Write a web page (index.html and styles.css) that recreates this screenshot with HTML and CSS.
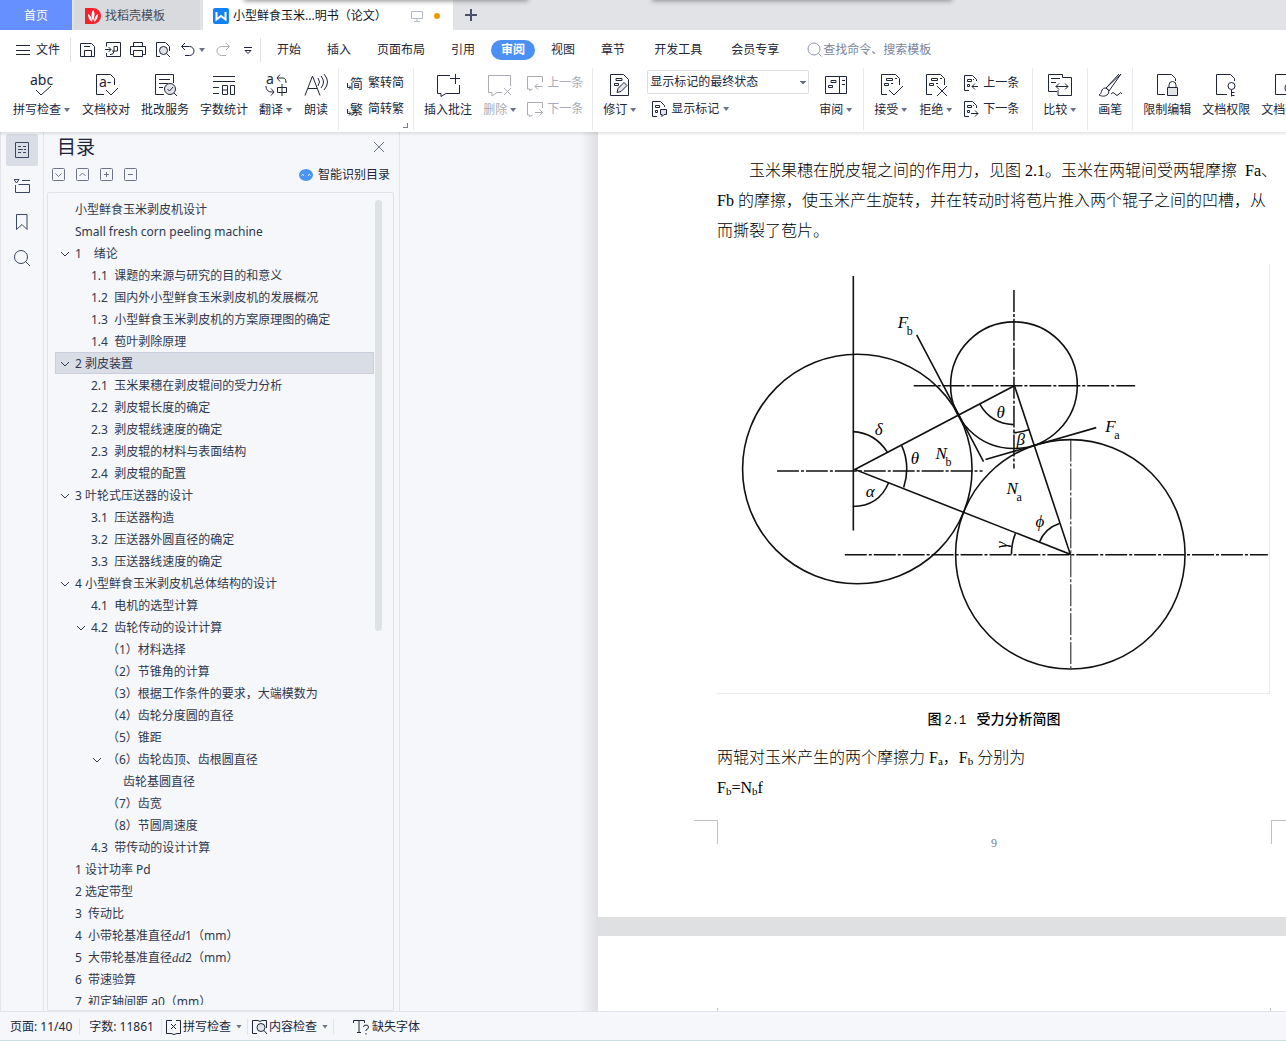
FILE: index.html
```html
<!DOCTYPE html>
<html lang="zh-CN">
<head>
<meta charset="utf-8">
<title>小型鲜食玉米剥皮机说明书（论文）</title>
<link rel="stylesheet" href="styles.css">
</head>
<body>
<svg class="defs" aria-hidden="true">
  <symbol id="page-lines" viewBox="0 0 24 24"><path d="M8 21.500H2.500v-20h14l4 4V12M7.500 5.500h6v2h-6zM16 5.500h2M5.500 10.500h4v2h-4zM12 10.500h2"/></symbol>
  <symbol id="mark-prev" viewBox="0 0 16 16"><path d="M6 15.500H1.500V.500h8l4 4V6M4.500 4.500h4v2h-4zM4.500 9.500h2v2h-2zM10 4.500h1M15 11.500H9M12 8.500l-3 3 3 3"/></symbol>
  <symbol id="mark-next" viewBox="0 0 16 16"><path d="M6 15.500H1.500V.500h8l4 4V7M4.500 4.500h4v2h-4zM4.500 9.500h2v2h-2zM10 4.500h1M8 12.500h7M12 9.500l3 3-3 3"/></symbol>
  <symbol id="note-prev" viewBox="0 0 16 16"><path d="M15.500 7V1.500H.500v12.500h2v1.500l3-1.500M15.500 11.500H8M11 8.500l-3 3 3 3"/></symbol>
  <symbol id="note-next" viewBox="0 0 16 16"><path d="M15.500 7V1.500H.500v12.500h2v1.500l3-1.500M8 11.500h7.500M12.500 8.500l3 3-3 3"/></symbol>
  <symbol id="fold" viewBox="0 0 10 10"><path d="M1 3l4 4 4-4"/></symbol>
</svg>

<header class="tabs">
  <div class="window-shade shade-a"></div>
  <div class="window-shade shade-b"></div>
  <button class="tab tab-home">首页</button>
  <button class="tab tab-docer">
    <svg class="ic16" viewBox="0 0 16 16"><path d="M0 0h8a8 8 0 0 1 0 16H0z" fill="#f5222d" stroke="none"/><path d="M8 2c2 2 2 6 0 11C6 9 6 5 8 2zM3 6c2 1 4 3 4 8C4 12 3 9 3 6zM13 6c0 3-1 6-4 8 0-4 2-7 4-8z" fill="#fff" stroke="none"/></svg>
    找稻壳模板
  </button>
  <button class="tab tab-doc">
    <svg class="ic16" viewBox="0 0 16 16"><rect width="16" height="16" rx="2" fill="#1382f5" stroke="none"/><path d="M3.500 4v7.500L8 8l4.500 3.500V4" stroke="#fff" stroke-width="2"/></svg>
    <span class="tab-name">小型鲜食玉米...明书（论文）</span>
    <svg class="ic12 monitor" viewBox="0 0 12 12"><path d="M.500 1.500h11v7H.500zM6 8.500V11M3 11.500h6"/></svg>
    <i class="unsaved"></i>
  </button>
  <button class="tab-add" aria-label="新建"><svg class="ic12" viewBox="0 0 12 12"><path d="M6 0v12M0 6h12" stroke-width="2"/></svg></button>
</header>

<nav class="menu">
  <button class="file-btn"><svg class="ic14" viewBox="0 0 14 14"><path d="M0 2.500h14M0 7.500h14M0 11.500h14"/></svg>文件</button>
  <div class="quick">
    <button aria-label="保存"><svg class="ic16" viewBox="0 0 16 16"><path d="M.500 14.500v-13h11l3 3v10zM4.500 14V8.500h7V14M4 4.500h6"/></svg></button>
    <button aria-label="输出为PDF"><svg class="ic16" viewBox="0 0 16 16"><path d="M1.500 4.500v-4h14v14h-14V11M0 7.500h6M3.500 5L6 7.500 3.500 10M5 12.500h1q3 0 3-4v-4h3.500v4.500H7"/></svg></button>
    <button aria-label="打印"><svg class="ic16" viewBox="0 0 16 16"><path d="M3.500 4.500v-4h9v4M3 12.500H.500v-8h15v8H13M3.500 8.500h9v6h-9z"/></svg></button>
    <button aria-label="打印预览"><svg class="ic16" viewBox="0 0 16 16"><path d="M5 14.500H1.500V.500h9l4 4V9"/><circle cx="8.500" cy="8.500" r="4" fill="#e2e4e8"/><path d="M11.500 11.500l3.500 3.500"/></svg></button>
    <button class="undo" aria-label="撤销"><svg class="ic16" viewBox="0 0 16 16"><path d="M5 1L1.500 4.500 5 8M2 4.500h7.500a4.500 4.500 0 0 1 0 9H5"/></svg><i class="caret"></i></button>
    <button class="off" aria-label="恢复"><svg class="ic16" viewBox="0 0 16 16"><path d="M11 1l3.500 3.500L11 8M14 4.500H6.500a4.500 4.500 0 0 0 0 9H11"/></svg></button>
    <button aria-label="自定义"><svg class="ic16" viewBox="0 0 16 16"><path d="M4 5.500h8M5 8.500h6l-3 3z"/></svg></button>
  </div>
  <div class="menu-items">
    <a href="#">开始</a><a href="#">插入</a><a href="#">页面布局</a><a href="#">引用</a><a href="#" class="current">审阅</a><a href="#">视图</a><a href="#">章节</a>
    <div class="menu-wide"><a href="#">开发工具</a><a href="#">会员专享</a></div>
  </div>
  <label class="find"><svg class="ic16" viewBox="0 0 16 16"><circle cx="7" cy="7" r="6"/><path d="M11.500 11.500l3 3"/></svg><input type="text" placeholder="查找命令、搜索模板"></label>
</nav>

<div class="ribbon">
  <div class="group">
    <button class="big"><svg class="ic24" viewBox="0 0 24 24"><text x="0" y="12" class="g14">abc</text><path d="M6 17l5 5 10-9"/></svg><span>拼写检查<i class="caret"></i></span></button>
    <button class="big"><svg class="ic24" viewBox="0 0 24 24"><path d="M10 21.500H2.500v-20h14l4 4V12M12 17l5 5 7-7"/><text x="5" y="14" class="g14">a-</text></svg><span>文档校对</span></button>
    <button class="big"><svg class="ic24" viewBox="0 0 24 24"><path d="M11 21.500H2.500v-20h18V10M6 6.500h11M6 10.500h9M6 14.500h4"/><circle cx="17" cy="16" r="5.500" fill="#e2e4e8"/><path d="M14.500 16l2 2 3.500-4M21 20l3 3"/></svg><span>批改服务</span></button>
    <button class="big"><svg class="ic24" viewBox="0 0 24 24"><path d="M1 3.500h22M1 8.500h22M1 14.500h6M1 20.500h6M10.500 12.500h5v9h-5zM10.500 17h5M18.500 12.500h4v9h-4z"/></svg><span>字数统计</span></button>
    <button class="big"><svg class="ic24" viewBox="0 0 24 24"><text x="2" y="11" class="g14">a</text><path d="M16 1.500L13 5l3 3.500M13 5h6q3 0 3 5M2 13q0 6 6 6h2M7 15.500l3 3.500-3 3.500M13.500 14.500h9v5h-9zM18 11v12"/></svg><span>翻译<i class="caret"></i></span></button>
    <button class="big"><svg class="ic24" viewBox="0 0 24 24"><path d="M1 22.500L8.500 3 16 22.500M4 15.500h9M14 5q3 4 0 8M17 3q5 6 0 12M20 1q7 8 0 16"/></svg><span>朗读</span></button>
  </div>
  <div class="group stack zh">
    <button class="row"><svg class="ic16" viewBox="0 0 16 16"><text x="3" y="13" class="g13">简</text><path d="M.500 8v4.500h3M2 10.500l2 2-2 2"/></svg>繁转简</button>
    <button class="row"><svg class="ic16" viewBox="0 0 16 16"><text x="3" y="13" class="g13">繁</text><path d="M.500 8v4.500h3M2 10.500l2 2-2 2"/></svg>简转繁</button>
    <i class="corner"></i>
  </div>
  <div class="group">
    <button class="big"><svg class="ic24" viewBox="0 0 24 24"><path d="M14 2.500H1.500v18H5v3l5-3h13.500V12M19.500 1v10M14 5.500h10"/></svg><span>插入批注</span></button>
    <button class="big off"><svg class="ic24" viewBox="0 0 24 24"><path d="M22.500 13V2.500H.500v17H4v3.500l5-3.500h5M16 15l7 7M23 15l-7 7"/></svg><span>删除<i class="caret"></i></span></button>
    <div class="stack inner">
      <button class="row off"><svg class="ic16"><use href="#note-prev"/></svg>上一条</button>
      <button class="row off"><svg class="ic16"><use href="#note-next"/></svg>下一条</button>
    </div>
  </div>
  <div class="group">
    <button class="big"><svg class="ic24" viewBox="0 0 24 24"><path d="M2.500 1.500h13l5 5v16h-18zM8 5.500h6v2H8zM6.500 10.500h4v2h-4z"/><path d="M9 19.500l1-4 6-6 3 3-6 6z" fill="#e2e4e8"/></svg><span>修订<i class="caret"></i></span></button>
    <div class="stack view">
      <select aria-label="显示状态"><option>显示标记的最终状态</option></select>
      <button class="row"><svg class="ic16" viewBox="0 0 16 16"><path d="M6 15.500H1.500V.500h8l4 4V6M4.500 4.500h4v2h-4zM4.500 9.500h2v2h-2z"/><path d="M9.500 8.500h6v5H13l-2 2v-2H9.500z" fill="#e2e4e8"/></svg>显示标记<i class="caret"></i></button>
    </div>
    <button class="big"><svg class="ic24" viewBox="0 0 24 24"><path d="M1.500 3.500h21v17h-21zM15.500 3.500v17M7 7.500h5v2H7zM4.500 12.500h4v2h-4zM18 7.500h3M18 11.500h3"/></svg><span>审阅<i class="caret"></i></span></button>
  </div>
  <div class="group verdict">
    <button class="big"><svg class="ic24" viewBox="0 0 24 24"><use href="#page-lines"/><path d="M10 17l5 5 9-9"/></svg><span>接受<i class="caret"></i></span></button>
    <button class="big"><svg class="ic24" viewBox="0 0 24 24"><use href="#page-lines"/><path d="M13 13l10 10M23 13L13 23"/></svg><span>拒绝<i class="caret"></i></span></button>
    <div class="stack inner">
      <button class="row"><svg class="ic16"><use href="#mark-prev"/></svg>上一条</button>
      <button class="row"><svg class="ic16"><use href="#mark-next"/></svg>下一条</button>
    </div>
  </div>
  <div class="group">
    <button class="big"><svg class="ic24" viewBox="0 0 24 24"><path d="M9 18.500H.500v-17h14v3M3 5.500h9M3 9.500h5M14.500 4.500h9v18h-13.500V17M8 13.500h12M11 10.500l-3 3 3 3M17 10.500l3 3-3 3"/></svg><span>比较<i class="caret"></i></span></button>
  </div>
  <div class="group">
    <button class="big"><svg class="ic24" viewBox="0 0 24 24"><path d="M23 1L8 15l3 3zM21 1L8.500 14.500M1 22c3-1 2-7 6-7s5 5 2 7-6 1-8 0zM13 21q2-3 4 0t4 0 3 0"/></svg><span>画笔</span></button>
  </div>
  <div class="group">
    <button class="big"><svg class="ic24" viewBox="0 0 24 24"><path d="M10 21.500H2.500v-20h14l4 4V8"/><path d="M14 14v-2a3.500 3.500 0 0 1 7 0v2"/><path d="M12.500 14.500h10v8h-10z" fill="#e2e4e8"/></svg><span>限制编辑</span></button>
    <button class="big"><svg class="ic24" viewBox="0 0 24 24"><path d="M13 21.500H2.500v-20h14l4 4V8"/><circle cx="17.500" cy="13" r="3.500"/><path d="M17.500 16.500v7M17.500 19.500h3M17.500 22.500h3"/></svg><span>文档权限</span></button>
    <button class="big"><svg class="ic24" viewBox="0 0 24 24"><path d="M13 21.500H2.500v-20h14l4 4V8"/><circle cx="17.500" cy="15" r="5.500"/></svg><span>文档认证</span></button>
  </div>
</div>

<main class="work">
  <aside class="rail">
    <button class="on" aria-label="目录"><svg class="ic16" viewBox="0 0 16 16"><path d="M1.500.500h13v15h-13zM4 4.500h3M9 4.500h3M4 7.500h5M10 7.500h2M4 10.500h3M9 10.500h3"/></svg></button>
    <button aria-label="章节"><svg class="ic16" viewBox="0 0 16 16"><path d="M0 1.500h5L2.500 5zM8 2.500h8M1.500 7v7.500h14v-8h-11"/></svg></button>
    <button aria-label="书签"><svg class="ic16" viewBox="0 0 16 16"><path d="M2.500.500h10.500v15L8 10.500l-5.500 5z"/></svg></button>
    <button aria-label="查找"><svg class="ic16" viewBox="0 0 16 16"><circle cx="7" cy="7" r="6.500"/><path d="M11.500 11.500L16 16"/></svg></button>
  </aside>

  <section class="toc">
    <div class="toc-head"><h2>目录</h2><button aria-label="关闭"><svg class="ic10" viewBox="0 0 10 10"><path d="M0 0l10 10M10 0L0 10"/></svg></button></div>
    <div class="toc-tools">
      <button aria-label="展开"><svg class="ic13" viewBox="0 0 13 13"><rect x=".500" y=".500" width="12" height="12" rx="1"/><path d="M3.500 5.500l3 3 3-3"/></svg></button>
      <button aria-label="收起"><svg class="ic13" viewBox="0 0 13 13"><rect x=".500" y=".500" width="12" height="12" rx="1"/><path d="M3.500 8l3-3 3 3"/></svg></button>
      <button aria-label="升级"><svg class="ic13" viewBox="0 0 13 13"><rect x=".500" y=".500" width="12" height="12" rx="1"/><path d="M6.500 4v5M4 6.500h5"/></svg></button>
      <button aria-label="降级"><svg class="ic13" viewBox="0 0 13 13"><rect x=".500" y=".500" width="12" height="12" rx="1"/><path d="M4 6.500h5"/></svg></button>
      <a href="#" class="smart"><svg class="ic14" viewBox="0 0 14 14"><ellipse cx="7" cy="7" rx="7" ry="6" fill="#4a94f2" stroke="none"/><path d="M2.500 7.500q1-2 2.500 0M9 7.500q1.500-2 2.500 0" stroke="#fff"/></svg>智能识别目录</a>
    </div>
    <div class="toc-box">
      <div class="toc-list">
        <a href="#" class="l1">小型鲜食玉米剥皮机设计</a>
        <a href="#" class="l1">Small fresh corn peeling machine</a>
        <a href="#" class="l1"><svg><use href="#fold"/></svg>1　绪论</a>
        <a href="#" class="l2">1.1  课题的来源与研究的目的和意义</a>
        <a href="#" class="l2">1.2  国内外小型鲜食玉米剥皮机的发展概况</a>
        <a href="#" class="l2">1.3  小型鲜食玉米剥皮机的方案原理图的确定</a>
        <a href="#" class="l2">1.4  苞叶剥除原理</a>
        <a href="#" class="l1 picked"><svg><use href="#fold"/></svg>2 剥皮装置</a>
        <a href="#" class="l2">2.1  玉米果穗在剥皮辊间的受力分析</a>
        <a href="#" class="l2">2.2  剥皮辊长度的确定</a>
        <a href="#" class="l2">2.3  剥皮辊线速度的确定</a>
        <a href="#" class="l2">2.3  剥皮辊的材料与表面结构</a>
        <a href="#" class="l2">2.4  剥皮辊的配置</a>
        <a href="#" class="l1"><svg><use href="#fold"/></svg>3 叶轮式压送器的设计</a>
        <a href="#" class="l2">3.1  压送器构造</a>
        <a href="#" class="l2">3.2  压送器外圆直径的确定</a>
        <a href="#" class="l2">3.3  压送器线速度的确定</a>
        <a href="#" class="l1"><svg><use href="#fold"/></svg>4 小型鲜食玉米剥皮机总体结构的设计</a>
        <a href="#" class="l2">4.1  电机的选型计算</a>
        <a href="#" class="l2"><svg><use href="#fold"/></svg>4.2  齿轮传动的设计计算</a>
        <a href="#" class="l3">（1）材料选择</a>
        <a href="#" class="l3">（2）节锥角的计算</a>
        <a href="#" class="l3">（3）根据工作条件的要求，大端模数为</a>
        <a href="#" class="l3">（4）齿轮分度圆的直径</a>
        <a href="#" class="l3">（5）锥距</a>
        <a href="#" class="l3"><svg><use href="#fold"/></svg>（6）齿轮齿顶、齿根圆直径</a>
        <a href="#" class="l4">齿轮基圆直径</a>
        <a href="#" class="l3">（7）齿宽</a>
        <a href="#" class="l3">（8）节圆周速度</a>
        <a href="#" class="l2">4.3  带传动的设计计算</a>
        <a href="#" class="l1">1 设计功率 Pd</a>
        <a href="#" class="l1">2 选定带型</a>
        <a href="#" class="l1">3  传动比</a>
        <a href="#" class="l1">4  小带轮基准直径<em>dd</em>1（mm）</a>
        <a href="#" class="l1">5  大带轮基准直径<em>dd</em>2（mm）</a>
        <a href="#" class="l1">6  带速验算</a>
        <a href="#" class="l1">7  初定轴间距 a0（mm）</a>
      </div>
      <div class="thumb"></div>
    </div>
  </section>

  <section class="canvas">
    <article class="sheet">
      <p>　　玉米果穗在脱皮辊之间的作用力，见图 2.1。玉米在两辊间受两辊摩擦&nbsp; Fa、<br>Fb 的摩擦，使玉米产生旋转，并在转动时将苞片推入两个辊子之间的凹槽，从<br>而撕裂了苞片。</p>
      <figure>
        <svg class="diagram" viewBox="717 264 553 430">
          <g class="ink">
            <circle cx="857.500" cy="469.500" r="115"/>
            <circle cx="1014.500" cy="385.500" r="63.500"/>
            <circle cx="1071" cy="555" r="115"/>
            <path d="M853.500 276v255M855 470l160-84 56 169zM917 335l67 127M986 460l111-32"/>
            <path d="M853 432q22 1 35 21M902 446q9 20 2 42M853 507q26 0 36-24M980 404q11 20 34 21M1014 433q8 0 16-3M1040 543q5-14 20-19M1012 555q0-11 4-21"/>
          </g>
          <path class="axis" d="M777 471.500h206M914 386h222M1014.500 290v179M845 555.500h424"/>
          <path class="axis thin" d="M1071.500 440v229"/>
          <g class="sym">
            <text x="898" y="328">F</text><text x="875" y="435">δ</text><text x="911" y="464">θ</text><text x="936" y="459">N</text>
            <text x="997" y="418">θ</text><text x="1017" y="445">β</text><text x="1106" y="432">F</text><text x="1007" y="495">N</text>
            <text x="866" y="498">α</text><text x="1036" y="528">ϕ</text><text transform="translate(1008 549) rotate(-90)">γ</text>
          </g>
          <g class="sub"><text x="907" y="335">b</text><text x="946" y="466">b</text><text x="1115" y="439">a</text><text x="1017" y="502">a</text></g>
        </svg>
        <figcaption>图 <span>2.1 </span> 受力分析简图</figcaption>
      </figure>
      <p>两辊对玉米产生的两个摩擦力 F<sub>a</sub>，F<sub>b</sub> 分别为<br>F<sub>b</sub>=N<sub>b</sub>f</p>
      <footer><i class="crop crop-l"></i><span>9</span><i class="crop crop-r"></i></footer>
    </article>
    <article class="sheet next"><div class="text-edge"></div></article>
  </section>
</main>

<footer class="status">
  <span class="cell">页面: 11/40</span>
  <span class="cell">字数: 11861</span>
  <button class="cell"><svg class="ic16" viewBox="0 0 16 16"><path d="M6 1.500H.500v13H5l3 1 3-1h3.500v-13H10M5 5l5 5M10 5l-5 5"/></svg>拼写检查<i class="caret"></i></button>
  <button class="cell"><svg class="ic16" viewBox="0 0 16 16"><path d="M5 14.500H.500v-13H6l2 1 2-1h4.500V9"/><circle cx="9" cy="8.500" r="4" fill="#e2e4e8"/><path d="M12 11.500l3 3.500"/></svg>内容检查<i class="caret"></i></button>
  <button class="cell fonts"><svg class="ic16" viewBox="0 0 16 16"><path d="M.500 4V1.500h11V4M6 1.500v12M4 13.500h4M10.500 8q0-2 2.500-2t2.500 2-2.500 3v1M13 14v1.500"/></svg>缺失字体</button>
</footer>
</body>
</html>
```
FILE: styles.css
```css
* { box-sizing: border-box; }
body {
  margin: 0;
  height: 100vh;
  display: flex;
  flex-direction: column;
  overflow: hidden;
  background: #fff;
  color: #20263a;
  font: 12px/16px "Noto Sans", "Noto Sans CJK SC", sans-serif;
}
button, input, select { font: inherit; color: inherit; border: 0; padding: 0; margin: 0; background: none; }
button { white-space: nowrap; }
a { color: inherit; text-decoration: none; }
svg { display: block; flex: none; fill: none; stroke: currentColor; stroke-width: 1; }
svg text { fill: currentColor; stroke: none; }
.g13 { font-size: 13px; }
.g14 { font-size: 14px; }
.defs { position: absolute; width: 0; height: 0; }
.ic10 { width: 10px; height: 10px; }
.ic12 { width: 12px; height: 12px; }
.ic13 { width: 13px; height: 13px; }
.ic14 { width: 14px; height: 14px; }
.ic16 { width: 16px; height: 16px; }
.ic24 { width: 24px; height: 24px; overflow: visible; }
.caret {
  flex: none;
  width: 6px;
  height: 4px;
  margin: 0 1px 0 3px;
  background: #6b7389;
  clip-path: polygon(0 0, 100% 0, 50% 100%);
}
.off { color: #a9acb3; }

/* document tabs */
.tabs { position: relative; flex: none; display: flex; height: 30px; background: #e1e3e6; overflow: hidden; }
.window-shade { position: absolute; top: -3px; height: 2px; box-shadow: 0 0 5px 2px #8b8b8b; }
.shade-a { left: 246px; width: 280px; }
.shade-b { left: 654px; width: 296px; }
.tab { display: flex; align-items: center; padding-top: 2px; }
.tab-home { width: 72px; justify-content: center; background: #668fff; color: #fff; }
.tab-docer { width: 126px; margin-left: 2px; padding-left: 11px; gap: 4px; background: #d8dadd; color: #454b5c; }
.tab-doc { width: 250px; margin-left: 3px; padding-left: 10px; gap: 4px; background: #fff; color: #10141f; }
.tab-name { width: 174px; text-align: left; }
.monitor { color: #b4b9cb; }
.unsaved { width: 6px; height: 6px; margin-left: 7px; border-radius: 3px; background: #e89a00; }
.tab-add { padding: 0 12px; color: #4a5068; }

/* menu */
.menu { flex: none; display: flex; align-items: center; height: 38px; padding-top: 2px; white-space: nowrap; }
.file-btn { display: flex; align-items: center; gap: 6px; padding: 0 10px 0 16px; height: 24px; border-right: 1px solid #dfe1e6; }
.quick { display: flex; align-items: center; gap: 9px; height: 24px; width: 190px; padding-left: 9px; border-right: 1px solid #dfe1e6; }
.quick button { display: flex; align-items: center; }
.quick .undo { width: 26px; }
.menu-items, .menu-wide { display: flex; align-items: center; gap: 26px; }
.menu-items { padding-left: 16px; }
.menu-wide { margin-left: 3px; gap: 29px; }
.menu-items .current { margin: 0 -10px; padding: 2px 10px; border-radius: 10px; background: #4a90f5; color: #fff; font-weight: 700; }
.find { display: flex; align-items: center; flex: 1; margin-left: 28px; color: #8e96ab; }
.find input { flex: 1; outline: 0; }
.find input::placeholder { color: #7b849b; opacity: 1; }

/* ribbon */
.ribbon {
  position: relative;
  z-index: 2;
  flex: none;
  display: flex;
  height: 64px;
  overflow: hidden;
}
.group { position: relative; flex: none; display: flex; gap: 11px; height: 62px; padding: 0 10px; border-right: 1px solid #e9eaed; }
.group:first-child { padding-left: 13px; }
.group:last-child { border: 0; }
.group.verdict { padding-right: 14px; }
.big { display: flex; flex-direction: column; align-items: center; gap: 5px; padding-top: 5px; }
.big span, .row { display: flex; align-items: center; }
.stack { display: flex; flex-direction: column; align-items: flex-start; gap: 10px; padding-top: 7px; }
.inner, .view { margin: 0 -1px; }
.row { gap: 4px; }
.group.zh { padding: 7px 9px 0 8px; }
.zh .row { gap: 5px; }
.corner { position: absolute; right: 5px; bottom: 2px; width: 5px; height: 5px; border: solid #747b90; border-width: 0 1px 1px 0; }
.view { gap: 7px; padding-top: 2px; }
.view select {
  appearance: none;
  width: 162px;
  height: 24px;
  padding: 0 2px;
  border: 1px solid #dcdee3;
  border-radius: 2px;
  background:
    linear-gradient(#6b7389, #6b7389) 152px 10px / 6px 1px no-repeat,
    linear-gradient(#6b7389, #6b7389) 153px 11px / 4px 1px no-repeat,
    linear-gradient(#6b7389, #6b7389) 154px 12px / 2px 1px no-repeat #fff;
}
.view .row { padding-left: 4px; }
.view .caret { margin-left: 0; }

/* workspace */
.work { position: relative; flex: 1; min-height: 0; display: flex; background: #f5f7fa; }
.work::before { content: ""; position: absolute; z-index: 3; inset: 0 0 auto; height: 4px; background: linear-gradient(#0000001a, #0000); }
.rail { flex: none; display: flex; flex-direction: column; gap: 4px; width: 44px; padding: 2px 5px; border: solid #e2e4ea; border-width: 0 1px; color: #3a4560; }
.rail button { display: flex; align-items: center; justify-content: center; height: 32px; border-radius: 2px; }
.rail .on { background: #d9dde5; }
.toc { flex: none; display: flex; flex-direction: column; width: 356px; padding: 0 5px 0 3px; border-right: 1px solid #e2e4ea; }
.toc-head { display: flex; align-items: center; justify-content: space-between; height: 31px; padding: 0 10px 2px; color: #6d7487; }
.toc-head h2 { margin: 0; font-size: 19px; line-height: 28px; font-weight: 400; color: #20263a; }
.toc-tools { display: flex; align-items: center; gap: 11px; height: 22px; padding: 0 4px 0 5px; color: #6d7487; }
.smart { display: flex; align-items: center; gap: 5px; margin-left: auto; padding-top: 2px; color: #20263a; }
.toc-box { flex: 1; min-height: 0; display: flex; margin-top: 7px; padding: 5px 11px 5px 7px; border: 1px solid #e0e3e9; border-radius: 2px; }
.toc-list { flex: 1; min-width: 0; overflow: hidden; color: #30384e; }
.toc-list a { display: block; height: 22px; line-height: 24px; padding-left: 20px; white-space: pre; }
.toc-list .l2 { padding-left: 36px; }
.toc-list .l3 { padding-left: 52px; }
.toc-list .l4 { padding-left: 68px; }
.toc-list svg { float: left; width: 10px; height: 10px; margin: 7px 5px 0 -15px; }
.toc-list .picked { background: #d9dde5; box-shadow: inset 0 0 0 1px #c8cedb; }
.toc-list em { font-family: "Liberation Serif", serif; font-size: 13px; line-height: 16px; }
.thumb { flex: none; width: 7px; height: 431px; margin: 2px 0 0 1px; border-radius: 4px; background: #dfe2e5; }

/* document */
.canvas { flex: 1; min-width: 0; overflow: hidden; padding-left: 198px; background: linear-gradient(to right, #f5f7fa 180px, #dedfe2 198px, #dfe0e2 198px); }
.sheet { width: 794px; padding: 24px 121px 0 119px; background: #fff; color: #000; font: 16px/30px "Liberation Serif", "Noto Sans CJK SC", serif; }
.sheet p { margin: 0; white-space: nowrap; font-weight: 300; }
.sheet sub { font-size: 11px; line-height: 0; vertical-align: -2px; }
figure { margin: 18px 0 8px; }
.diagram { width: 553px; height: 430px; border: solid #ececec; border-width: 0 1px 1px 0; }
.ink { stroke: #111; stroke-width: 1.6; }
.axis { stroke: #111; stroke-width: 1.5; stroke-dasharray: 22 2 3 2; }
.axis.thin { stroke-width: 1; }
.sym { font: italic 17px "Liberation Serif", serif; }
.sub { font: 12px "Liberation Serif", serif; }
figcaption { padding: 10px 0 0; font: 500 14px/28px "Noto Sans CJK SC", sans-serif; text-align: center; white-space: pre; }
figcaption span { font-family: "Liberation Mono", monospace; font-size: 12px; }
.sheet footer { position: relative; height: 114px; padding-top: 25px; text-align: center; font-size: 12px; color: #777f8d; }
.crop { position: absolute; top: 17px; width: 24px; height: 24px; border: solid #bfc1c5; }
.crop-l { left: -23px; border-width: 1px 1px 0 0; }
.crop-r { right: -24px; border-width: 1px 0 0 1px; }
.next { height: 200px; margin-top: 19px; padding-top: 72px; }
.text-edge { height: 24px; border: solid #bfc1c5; border-width: 0 1px; }

/* status bar */
.status { flex: none; display: flex; align-items: center; height: 30px; padding: 1px 0 0 5px; border-top: 1px solid #e0e3e9; border-bottom: 1px solid #c9dfe4; background: #f5f7fa; }
.cell { display: flex; align-items: center; gap: 1px; height: 16px; padding: 0 7px 0 5px; border-right: 1px solid #e2e4ea; white-space: nowrap; }
.cell + span { padding-left: 9px; }
button.cell { padding: 0 4px; }
.cell .caret { margin-left: 4px; }
button.fonts { padding-left: 19px; gap: 3px; border: 0; }
```
